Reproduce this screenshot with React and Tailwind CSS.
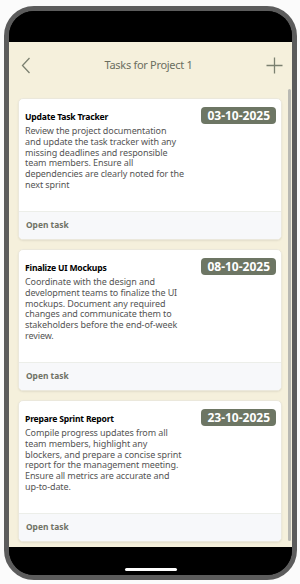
const tasks = [
  {
    title: 'Update Task Tracker',
    date: '03-10-2025',
    desc: 'Review the project documentation\nand update the task tracker with any\nmissing deadlines and responsible\nteam members. Ensure all\ndependencies are clearly noted for the\nnext sprint',
  },
  {
    title: 'Finalize UI Mockups',
    date: '08-10-2025',
    desc: 'Coordinate with the design and\ndevelopment teams to finalize the UI\nmockups. Document any required\nchanges and communicate them to\nstakeholders before the end-of-week\nreview.',
  },
  {
    title: 'Prepare Sprint Report',
    date: '23-10-2025',
    desc: 'Compile progress updates from all\nteam members, highlight any\nblockers, and prepare a concise sprint\nreport for the management meeting.\nEnsure all metrics are accurate and\nup-to-date.',
  },
];

function TaskCard({ task }) {
  return (
    <div className="bg-white rounded-[5px] border border-[#ebe8dc] shadow-[0_1px_2px_rgba(0,0,0,0.08)] overflow-hidden">
      <div className="h-[112px] flex justify-between pl-[6px] pr-[5px] pt-[8px]">
        <div className="w-[172px] pt-[4px]">
          <h3 className="text-[8.6px] leading-[12px] font-bold text-black tracking-[-0.2px]">{task.title}</h3>
          <p className="mt-[3px] text-[9px] leading-[10.8px] text-[#555555] tracking-[-0.1px] whitespace-pre-line">
            {task.desc}
          </p>
        </div>
        <div className="h-[17px] px-[6px] rounded-[4px] bg-[#6d7664] text-white text-[12px] font-bold leading-[17px]">
          {task.date}
        </div>
      </div>
      <div className="h-[28px] bg-[#f7f8fa] border-t border-[#eceee9] flex items-center px-[7px]">
        <span className="text-[8.4px] font-bold text-[#6f7265]">Open task</span>
      </div>
    </div>
  );
}

export default function App() {
  return (
    <div className="w-[300px] h-[584px] bg-[#fbfbfb] pt-[6px] pl-[4px]" style={{ fontFamily: '"Noto Sans", sans-serif' }}>
      <div className="w-[293px] h-[574px] border-[5px] border-[#5c5c5c] rounded-[30px] overflow-hidden flex flex-col bg-black">
        {/* status bar */}
        <div className="h-[31px] bg-black shrink-0"></div>

        <div className="flex-1 bg-[#f5f0dc] flex flex-col min-h-0">
          {/* header */}
          <div className="h-[46px] shrink-0 flex items-center justify-between pl-[12px] pr-[9px]">
            <svg width="10" height="17" viewBox="0 0 10 17" fill="none">
              <path d="M8.5 1 L1.5 8.5 L8.5 16" stroke="#7b8070" strokeWidth="1.3" />
            </svg>
            <span className="text-[11px] text-[#6b6e5f] tracking-[-0.3px]">Tasks for Project 1</span>
            <svg width="17" height="17" viewBox="0 0 17 17" fill="none">
              <path d="M8.5 0.5 V16.5 M0.5 8.5 H16.5" stroke="#7b8070" strokeWidth="1.3" />
            </svg>
          </div>

          {/* list */}
          <div className="flex-1 flex min-h-0">
            <div className="flex-1 pl-[9px] pr-[6px] pt-[10px] flex flex-col gap-[9px]">
              {tasks.map((t, i) => (
                <TaskCard key={i} task={t} />
              ))}
            </div>
            <div className="w-[4px] pt-[1px] pb-[6px] pr-[1px] flex flex-col">
              <div className="flex-1 w-[3px] bg-[#b9b9b3] rounded-full"></div>
            </div>
          </div>
        </div>

        {/* bottom bar */}
        <div className="h-[28px] shrink-0 bg-black flex items-end justify-center pb-[4px]">
          <div className="w-[52px] h-[3px] rounded-full bg-white"></div>
        </div>
      </div>
    </div>
  );
}
